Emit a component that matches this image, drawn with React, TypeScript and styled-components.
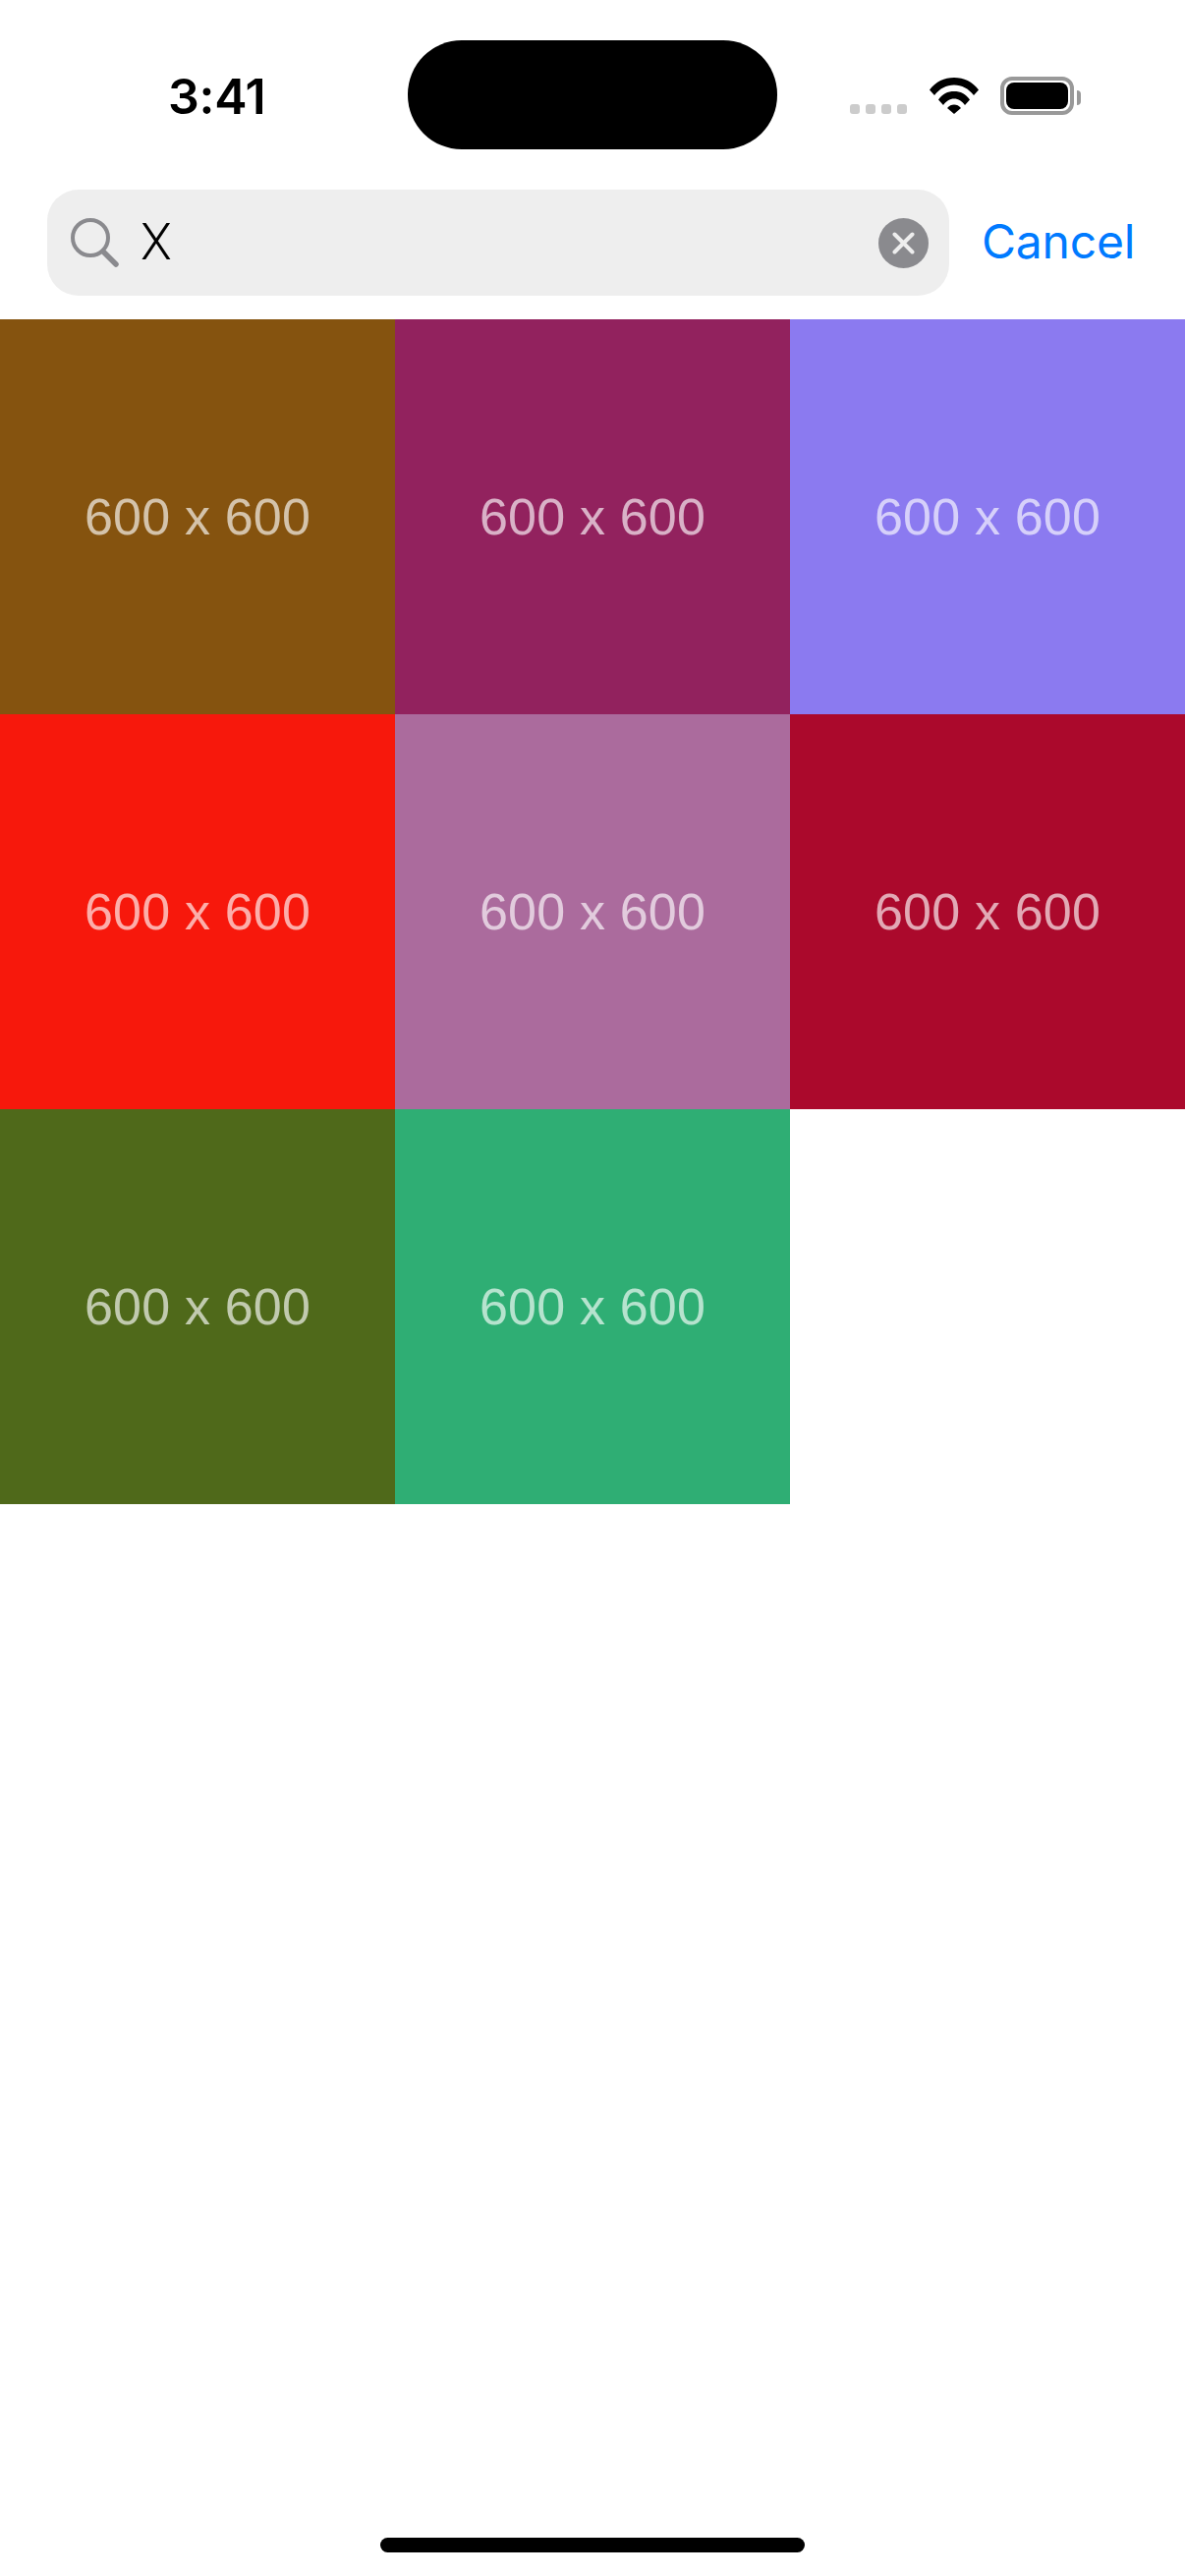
import { FC } from "react"
import styled, { createGlobalStyle } from "styled-components"

const tiles = ["#85530f", "#92225e", "#8b7af0", "#f7180c", "#ab6b9d", "#ab092c", "#4f691a", "#2fae74"]

const GlobalStyle = createGlobalStyle`
  html, body {
    margin: 0;
    padding: 0;
    background: #fff;
  }
`

const Page = styled.div`
  width: 1206px;
  height: 2622px;
  display: flex;
  flex-direction: column;
  background: #fff;
  overflow: hidden;
`

const StatusBar = styled.div`
  height: 193px;
  flex-shrink: 0;
  display: flex;
  align-items: flex-start;
  box-sizing: border-box;
  padding-top: 41px;
`

const Time = styled.div`
  width: 415px;
  flex-shrink: 0;
  box-sizing: border-box;
  padding: 28px 0 0 171px;
  font-family: Inter, sans-serif;
  font-size: 50px;
  font-weight: 600;
  line-height: 58px;
  color: #000;
  letter-spacing: -0.3px;
`

const Island = styled.div`
  width: 376px;
  height: 111px;
  border-radius: 55px;
  background: #000;
  flex-shrink: 0;
`

const StatusIcons = styled.div`
  display: flex;
  align-items: flex-end;
  height: 39px;
  margin: 37px 0 0 74px;
`

const Dots = styled.div`
  display: flex;
  gap: 6px;
  margin: 0 23px 1px 0;
`

const Dot = styled.span`
  width: 10px;
  height: 10px;
  border-radius: 3px;
  background: #cccccc;
`

const Wifi = styled.svg`
  width: 50px;
  height: 37px;
  margin: 0 22px 1px 0;
`

const Battery = styled.div`
  position: relative;
  width: 63px;
  height: 27px;
  border: 4px solid #999999;
  border-radius: 12px;
  padding: 2px;
  display: flex;
  box-sizing: content-box;
`

const BatteryFill = styled.div`
  flex: 1;
  background: #000;
  border-radius: 8px;
`

const BatteryCap = styled.div`
  position: absolute;
  right: -11px;
  top: 10px;
  width: 4px;
  height: 15px;
  background: #999999;
  border-radius: 0 8px 8px 0;
`

const SearchRow = styled.div`
  height: 108px;
  flex-shrink: 0;
  display: flex;
  align-items: center;
  padding-left: 48px;
  margin-bottom: 24px;
`

const SearchBox = styled.div`
  width: 918px;
  height: 108px;
  border-radius: 32px;
  background: #eeeeee;
  display: flex;
  align-items: center;
  box-sizing: border-box;
  padding: 0 21px 0 24px;
`

const SearchIcon = styled.svg`
  width: 50px;
  height: 50px;
  flex-shrink: 0;
`

const Query = styled.div`
  flex: 1;
  margin-left: 21px;
  font-family: Roboto, sans-serif;
  font-size: 52px;
  font-weight: 300;
  line-height: 60px;
  color: #000;
`

const ClearIcon = styled.svg`
  width: 51px;
  height: 51px;
  flex-shrink: 0;
`

const Cancel = styled.div`
  margin: -2px 0 0 33px;
  font-family: Inter, sans-serif;
  font-size: 48px;
  line-height: 60px;
  letter-spacing: -0.2px;
  color: #007aff;
`

const Grid = styled.div`
  display: grid;
  grid-template-columns: repeat(3, 402px);
  grid-auto-rows: 402px;
`

const Tile = styled.div<{ $color: string }>`
  display: flex;
  align-items: center;
  justify-content: center;
  background: ${props => props.$color};
  font-family: "Liberation Sans", sans-serif;
  font-size: 52px;
  letter-spacing: 0.2px;
  color: rgba(255, 255, 255, 0.65);
`

const HomeIndicator = styled.div`
  width: 432px;
  height: 15px;
  border-radius: 8px;
  background: #000;
  margin: auto auto 24px;
`

const App: FC = () => {
  return (
    <Page>
      <GlobalStyle />
      <StatusBar>
        <Time>3:41</Time>
        <Island />
        <StatusIcons>
          <Dots>
            <Dot />
            <Dot />
            <Dot />
            <Dot />
          </Dots>
          <Wifi viewBox="0 0 50 37">
            <path d="M0 12.500C6.500 4 15 0 25 0s18.500 4 25 12.500l-5 5.500C39.500 11 33 7.500 25 7.500S10.500 11 5 18z" fill="#000" />
            <path d="M9 22.500C13 16.500 18.500 14 25 14s12 2.500 16 8.500l-5 5.500C33 24 29.500 21.500 25 21.500S17 24 14 28z" fill="#000" />
            <path d="M18 31C20 28.500 22.300 27.500 25 27.500s5 1 7 3.500L25 37z" fill="#000" />
          </Wifi>
          <Battery>
            <BatteryFill />
            <BatteryCap />
          </Battery>
        </StatusIcons>
      </StatusBar>
      <SearchRow>
        <SearchBox>
          <SearchIcon viewBox="0 0 50 50">
            <circle cx="20" cy="20" r="18" fill="none" stroke="#8a8a8e" strokeWidth="4" />
            <path d="M33 34L46 47" stroke="#8a8a8e" strokeWidth="5.500" strokeLinecap="round" />
          </SearchIcon>
          <Query>X</Query>
          <ClearIcon viewBox="0 0 51 51">
            <circle cx="25.500" cy="25.500" r="25.500" fill="#8a8a8e" />
            <path d="M16.500 16.500L34.500 34.500M34.500 16.500L16.500 34.500" stroke="#eeeeee" strokeWidth="4" strokeLinecap="round" />
          </ClearIcon>
        </SearchBox>
        <Cancel>Cancel</Cancel>
      </SearchRow>
      <Grid>
        {tiles.map(color => (
          <Tile key={color} $color={color}>600 x 600</Tile>
        ))}
      </Grid>
      <HomeIndicator />
    </Page>
  )
}

export default App
